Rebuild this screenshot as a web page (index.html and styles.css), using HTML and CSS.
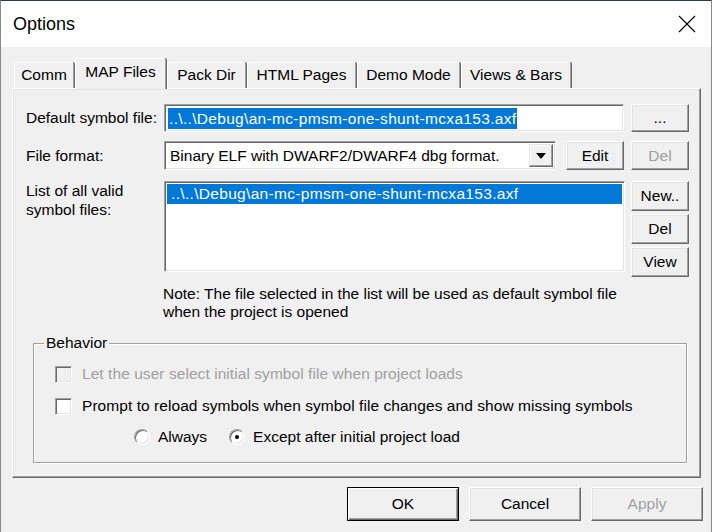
FILE: index.html
```html
<!DOCTYPE html>
<html>
<head>
<meta charset="utf-8">
<title>Options</title>
<link rel="stylesheet" href="styles.css">
</head>
<body>
<div class="window">
  <div class="titlebar">
    <span class="title">Options</span>
    <svg class="close" width="18" height="18" viewBox="0 0 18 18"><path d="M1 1 L17 17 M17 1 L1 17" stroke="#000" stroke-width="1.1" fill="none"/></svg>
  </div>
  <div class="client">
    <div class="tabs">
      <div class="tab t-comm">Comm</div>
      <div class="tab sel t-map">MAP Files</div>
      <div class="tab t-pack">Pack Dir</div>
      <div class="tab t-html">HTML Pages</div>
      <div class="tab t-demo">Demo Mode</div>
      <div class="tab t-views">Views &amp; Bars</div>
    </div>
    <div class="panel">
      <div class="row row1">
        <div class="lbl">Default symbol file:</div>
        <div class="field"><span class="hl path">..\..\Debug\an-mc-pmsm-one-shunt-mcxa153.axf</span></div>
        <div class="btn side">...</div>
      </div>
      <div class="row row2">
        <div class="lbl">File format:</div>
        <div class="ctrl">
          <div class="combo"><span class="combo-text">Binary ELF with DWARF2/DWARF4 dbg format.</span><span class="drop"><svg width="10" height="6" viewBox="0 0 10 6"><path d="M0 0 H10 L5 6 Z" fill="#000"/></svg></span></div>
          <div class="btn edit">Edit</div>
        </div>
        <div class="btn side dis">Del</div>
      </div>
      <div class="row row3">
        <div class="lbl two">List of all valid<br>symbol files:</div>
        <div class="list"><div class="item path">..\..\Debug\an-mc-pmsm-one-shunt-mcxa153.axf</div></div>
        <div class="btncol">
          <div class="btn side">New..</div>
          <div class="btn side">Del</div>
          <div class="btn side">View</div>
        </div>
      </div>
      <div class="note">Note: The file selected in the list will be used as default symbol file<br>when the project is opened</div>
      <fieldset class="group">
        <legend>Behavior</legend>
        <div class="opt dis"><span class="chk"></span><span>Let the user select initial symbol file when project loads</span></div>
        <div class="opt"><span class="chk on"></span><span>Prompt to reload symbols when symbol file changes and show missing symbols</span></div>
        <div class="radios">
          <span class="radio"></span><span class="rlbl">Always</span>
          <span class="radio checked"></span><span class="rlbl">Except after initial project load</span>
        </div>
      </fieldset>
    </div>
    <div class="footer">
      <div class="btn big def">OK</div>
      <div class="btn big">Cancel</div>
      <div class="btn big dis">Apply</div>
    </div>
  </div>
</div>
</body>
</html>
```
FILE: styles.css
```css
* { box-sizing: border-box; }
html, body { margin: 0; padding: 0; }
body {
  width: 712px;
  height: 532px;
  overflow: hidden;
  font-family: "Liberation Sans", Arial, sans-serif;
  font-size: 15.5px;
  color: #000;
  background: #f0f0f0;
}
.window {
  width: 712px;
  height: 532px;
  border-top: 1px solid #2e3b4a;
  border-left: 1px solid #8a8a8a;
  border-right: 1px solid #8a8a8a;
  display: flex;
  flex-direction: column;
}
.titlebar {
  height: 46px;
  background: #fff;
  display: flex;
  align-items: center;
  justify-content: space-between;
  padding: 0 15px 0 12px;
}
.title {
  font-size: 18px;
  line-height: 20px;
  margin-top: -1px;
}
.close { display: block; margin-top: -1px; }
.client {
  flex: 1;
  background: #f0f0f0;
  padding-top: 11px;
}
.tabs {
  display: flex;
  align-items: flex-end;
  gap: 1px;
  padding-left: 13px;
  margin-bottom: -1px;
  height: 31px;
  position: relative;
  z-index: 1;
}
.tab {
  height: 26px;
  margin-bottom: 1px;
  border-top: 1px solid #fff;
  border-left: 1px solid #fff;
  border-right: 1px solid #a0a0a0;
  box-shadow: 1px 0 0 #696969;
  border-radius: 2px 2px 0 0;
  background: #f0f0f0;
  text-align: center;
  line-height: 24px;
  white-space: nowrap;
}
.tab.sel {
  height: 31px;
  margin-bottom: 0;
  line-height: 26px;
}
.t-comm { width: 60px; }
.t-map { width: 91px; }
.t-pack { width: 79px; }
.t-html { width: 109px; }
.t-demo { width: 103px; }
.t-views { width: 110px; }

.panel {
  margin-left: 11px;
  width: 689px;
  height: 390px;
  border: 1px solid;
  border-color: #fff #696969 #696969 #fff;
  box-shadow: inset -1px -1px 0 #a0a0a0, inset 1px 1px 0 #e3e3e3;
  padding: 15px 0 0 13px;
}
.row { display: flex; align-items: center; }
.row2 { margin-top: 9px; }
.row3 { margin-top: 11px; align-items: flex-start; }
.lbl { width: 138px; white-space: nowrap; }
.lbl.two { line-height: 19px; margin-top: 0; }

.btn {
  background: #f0f0f0;
  border: 1px solid;
  border-color: #fff #696969 #696969 #fff;
  box-shadow: inset -1px -1px 0 #a0a0a0, inset 1px 1px 0 #e3e3e3;
  display: flex;
  align-items: center;
  justify-content: center;
  white-space: nowrap;
}
.btn.dis { color: #a0a0a0; }
.side { width: 58px; height: 28px; margin-left: 7px; }
.row2 .side { height: 29px; }

.path { letter-spacing: 0.32px; }

.field {
  width: 460px;
  height: 28px;
  background: #fff;
  border: 1px solid;
  border-color: #a0a0a0 #fff #fff #a0a0a0;
  box-shadow: inset 1px 1px 0 #696969, inset -1px -1px 0 #e3e3e3;
  padding: 2px 0 0 3px;
  display: flex;
  align-items: center;
}
.hl {
  background: #0078d7;
  color: #fff;
  height: 21px;
  line-height: 21px;
  padding: 0 1px;
  margin-top: -2px;
}
.ctrl { width: 460px; display: flex; align-items: center; }
.combo {
  width: 392px;
  height: 29px;
  background: #fff;
  border: 1px solid;
  border-color: #a0a0a0 #fff #fff #a0a0a0;
  box-shadow: inset 1px 1px 0 #696969, inset -1px -1px 0 #e3e3e3;
  display: flex;
  align-items: center;
  justify-content: space-between;
  padding: 0 2px 0 5px;
}
.drop {
  width: 24px;
  height: 23px;
  background: #f0f0f0;
  border: 1px solid;
  border-color: #e3e3e3 #696969 #696969 #e3e3e3;
  box-shadow: inset -1px -1px 0 #a0a0a0, inset 1px 1px 0 #fff;
  display: flex;
  align-items: center;
  justify-content: center;
}
.drop svg { display: block; }
.edit { width: 58px; height: 29px; margin-left: 10px; }

.list {
  width: 461px;
  height: 91px;
  background: #fff;
  border: 1px solid;
  border-color: #a0a0a0 #fff #fff #a0a0a0;
  box-shadow: inset 1px 1px 0 #696969, inset -1px -1px 0 #e3e3e3;
  padding: 2px 2px 0 2px;
}
.item {
  background: #0078d7;
  color: #fff;
  height: 20px;
  line-height: 20px;
  padding-left: 4px;
}
.btncol { display: flex; flex-direction: column; gap: 3px; margin-left: -1px; }
.btncol .side { height: 30px; }

.note {
  margin-top: 8px;
  margin-left: 137px;
  line-height: 18px;
}

.group {
  margin: 13px 0 0 7px;
  width: 654px;
  height: 129px;
  border: 1px solid #a0a0a0;
  box-shadow: inset 1px 1px 0 #fff, 1px 1px 0 #fff;
  padding: 6px 10px 0 10px;
}
.group legend {
  padding: 0 2px;
  line-height: 18px;
}
.opt {
  display: flex;
  align-items: center;
  height: 32px;
  padding-left: 11px;
  letter-spacing: 0.06px;
}
.opt.dis { color: #a0a0a0; }
.chk {
  width: 17px;
  height: 17px;
  margin-right: 10px;
  background: #fff;
  border: 1px solid;
  border-color: #a0a0a0 #fff #fff #a0a0a0;
  box-shadow: inset 1px 1px 0 #696969, inset -1px -1px 0 #e3e3e3;
  flex: none;
}
.opt.dis .chk { background: #f0f0f0; }
.radios {
  display: flex;
  align-items: center;
  height: 30px;
  padding-left: 90px;
}
.radio {
  width: 16px;
  height: 16px;
  border-radius: 50%;
  background: #fff;
  border: 1px solid;
  border-color: #a0a0a0 #fff #fff #a0a0a0;
  box-shadow: inset 1px 1px 0 #696969, inset -1px -1px 0 #e3e3e3;
  display: flex;
  align-items: center;
  justify-content: center;
  flex: none;
}
.radio.checked::after {
  content: "";
  width: 4px;
  height: 4px;
  border-radius: 50%;
  background: #000;
}
.rlbl { margin-left: 8px; margin-right: 22px; }

.footer {
  display: flex;
  justify-content: flex-end;
  gap: 10px;
  padding: 9px 8px 0 0;
}
.big { width: 112px; height: 34px; }
.btn.def {
  border: 1px solid #000;
  box-shadow: inset 1px 1px 0 #fff, inset -1px -1px 0 #696969, inset -2px -2px 0 #a0a0a0;
}
```
